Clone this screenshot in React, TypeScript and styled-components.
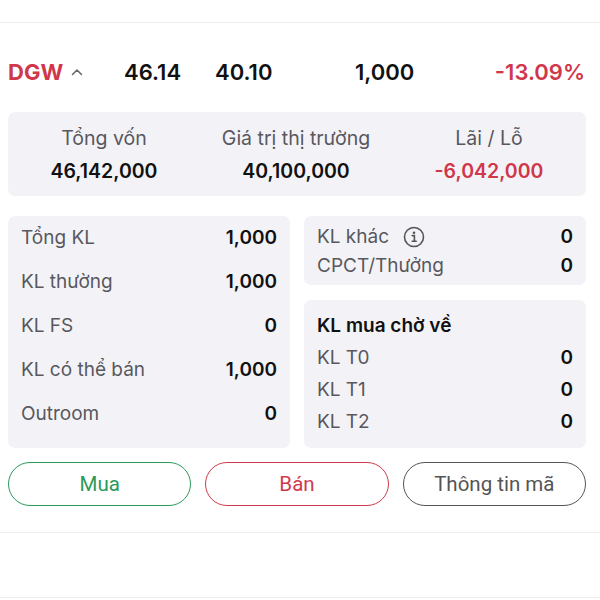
import React from "react"
import styled, { createGlobalStyle } from "styled-components"

const GlobalStyle = createGlobalStyle`
  html, body {
    margin: 0;
    padding: 0;
    background: #fff;
    font-family: Inter, "Noto Sans", sans-serif;
  }
`

const Page = styled.div`
  width: 600px;
  height: 600px;
  overflow: hidden;
  background: #fff;
  display: flex;
  flex-direction: column;
`

const TopSpace = styled.div`
  height: 22px;
  flex-shrink: 0;
  border-bottom: 1px solid #ededed;
`

const QuoteRow = styled.div`
  height: 89px;
  flex-shrink: 0;
  padding: 9px 15px 0 8px;
  display: grid;
  grid-template-columns: 116px 91px 140px 1fr 1fr;
  align-items: center;
  box-sizing: border-box;
`

const Ticker = styled.div`
  display: flex;
  align-items: center;
  gap: 8px;
  color: #d0374b;
  font-size: 22px;
  font-weight: 700;
`

const Num = styled.div<{ $align?: string; $red?: boolean }>`
  font-size: 22px;
  font-weight: 600;
  color: ${p => (p.$red ? "#d0374b" : "#111")};
  text-align: ${p => p.$align || "left"};
`

const Card = styled.div`
  background: #f3f3f7;
  border-radius: 7px;
`

const Summary = styled(Card)`
  margin: 0 14px 0 8px;
  height: 84px;
  flex-shrink: 0;
  display: grid;
  grid-template-columns: 192px 192px 1fr;
  align-items: center;
`

const SummaryCol = styled.div`
  display: flex;
  flex-direction: column;
  align-items: center;
  gap: 9px;
`

const Label = styled.div<{ $size?: number }>`
  font-size: ${p => p.$size || 19}px;
  line-height: 24px;
  color: #58585e;
`

const Value = styled.div<{ $red?: boolean; $size?: number }>`
  font-size: ${p => p.$size || 19}px;
  line-height: 24px;
  font-weight: 600;
  color: ${p => (p.$red ? "#d0374b" : "#111")};
`

const Grid = styled.div`
  margin: 20px 14px 0 8px;
  display: grid;
  grid-template-columns: 282px 282px;
  column-gap: 14px;
`

const LeftCard = styled(Card)`
  height: 232px;
  padding: 0 13px;
  display: flex;
  flex-direction: column;
  box-sizing: border-box;
`

const RightCol = styled.div`
  display: flex;
  flex-direction: column;
  gap: 15px;
`

const SmallCard = styled(Card)<{ $h: number; $pt: number }>`
  height: ${p => p.$h}px;
  padding: ${p => p.$pt}px 13px 0;
  box-sizing: border-box;
  display: flex;
  flex-direction: column;
`

const Row = styled.div<{ $h: number }>`
  height: ${p => p.$h}px;
  flex-shrink: 0;
  display: flex;
  align-items: center;
  justify-content: space-between;
`

const LabelWrap = styled.div`
  display: flex;
  align-items: center;
  gap: 14px;
`

const CardTitle = styled.div`
  height: 34px;
  display: flex;
  align-items: center;
  font-size: 19px;
  font-weight: 600;
  color: #111;
`

const Buttons = styled.div`
  margin: 14px 14px 0 8px;
  display: grid;
  grid-template-columns: repeat(3, 1fr);
  column-gap: 14px;
`

const Pill = styled.div<{ $c: string }>`
  height: 44px;
  border: 1.5px solid ${p => p.$c};
  border-radius: 22px;
  box-sizing: border-box;
  display: flex;
  align-items: center;
  justify-content: center;
  font-family: Roboto, sans-serif;
  font-size: 20.5px;
  color: ${p => p.$c};
`

const BottomBar = styled.div`
  margin-top: 26px;
  height: 64px;
  flex-shrink: 0;
  border-top: 1px solid #ededed;
  border-bottom: 1px solid #ededed;
`

const Chevron = () => (
  <svg width="12" height="8" viewBox="0 0 12 8">
    <path d="M1.5 6.5 L6 2 L10.5 6.5" fill="none" stroke="#666" strokeWidth="1.5" strokeLinecap="round" strokeLinejoin="round" />
  </svg>
)

const InfoIcon = () => (
  <svg width="22" height="22" viewBox="0 0 22 22">
    <circle cx="11" cy="11" r="9.5" fill="none" stroke="#555" strokeWidth="1.6" />
    <circle cx="11" cy="6.8" r="1.3" fill="#555" />
    <path d="M9.2 9.6 H11.4 V15.2 M9.2 15.2 H13.2" fill="none" stroke="#555" strokeWidth="1.6" strokeLinecap="round" />
  </svg>
)

const leftRows = [
  ["Tổng KL", "1,000"],
  ["KL thường", "1,000"],
  ["KL FS", "0"],
  ["KL có thể bán", "1,000"],
  ["Outroom", "0"],
]

const pendingRows = [
  ["KL T0", "0"],
  ["KL T1", "0"],
  ["KL T2", "0"],
]

export default function App() {
  return (
    <Page>
      <GlobalStyle />
      <TopSpace />
      <QuoteRow>
        <Ticker>
          DGW <Chevron />
        </Ticker>
        <Num>46.14</Num>
        <Num>40.10</Num>
        <Num>1,000</Num>
        <Num $align="right" $red>-13.09%</Num>
      </QuoteRow>

      <Summary>
        <SummaryCol>
          <Label $size={19.5}>Tổng vốn</Label>
          <Value $size={19.5}>46,142,000</Value>
        </SummaryCol>
        <SummaryCol>
          <Label $size={19.5}>Giá trị thị trường</Label>
          <Value $size={19.5}>40,100,000</Value>
        </SummaryCol>
        <SummaryCol>
          <Label $size={19.5}>Lãi / Lỗ</Label>
          <Value $size={19.5} $red>-6,042,000</Value>
        </SummaryCol>
      </Summary>

      <Grid>
        <LeftCard>
          {leftRows.map(([l, v]) => (
            <Row $h={44} key={l}>
              <Label>{l}</Label>
              <Value>{v}</Value>
            </Row>
          ))}
        </LeftCard>
        <RightCol>
          <SmallCard $h={69} $pt={6.5}>
            <Row $h={29}>
              <LabelWrap>
                <Label>KL khác</Label>
                <InfoIcon />
              </LabelWrap>
              <Value>0</Value>
            </Row>
            <Row $h={29}>
              <Label>CPCT/Thưởng</Label>
              <Value>0</Value>
            </Row>
          </SmallCard>
          <SmallCard $h={148} $pt={8}>
            <CardTitle>KL mua chờ về</CardTitle>
            {pendingRows.map(([l, v]) => (
              <Row $h={32} key={l}>
                <Label>{l}</Label>
                <Value>{v}</Value>
              </Row>
            ))}
          </SmallCard>
        </RightCol>
      </Grid>

      <Buttons>
        <Pill $c="#2b9a5c">Mua</Pill>
        <Pill $c="#cf3a4c">Bán</Pill>
        <Pill $c="#555">Thông tin mã</Pill>
      </Buttons>

      <BottomBar />
    </Page>
  )
}
